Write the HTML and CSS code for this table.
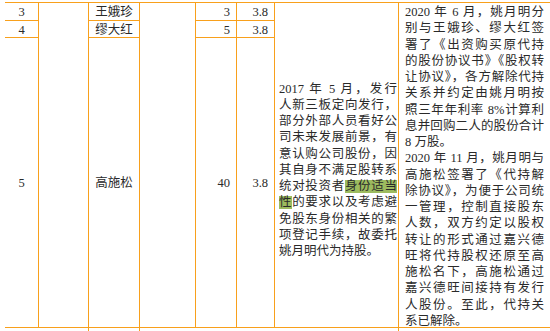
FILE: index.html
```html
<!DOCTYPE html>
<html lang="zh-CN">
<head>
<meta charset="utf-8">
<title>代持情况</title>
<link rel="stylesheet" href="styles.css">
</head>
<body>
<div class="sheet">
  <div class="grid">
    <div class="cell c-num">3</div>
    <div class="cell span3"></div>
    <div class="cell c-name">王娥珍</div>
    <div class="cell span3"></div>
    <div class="cell c-right">3</div>
    <div class="cell c-right">3.8</div>
    <div class="cell span3 c-desc">
      <div class="txt">
        <span class="ln">2017 年 5 月，发行</span>
        <span class="ln">人新三板定向发行，</span>
        <span class="ln">部分外部人员看好公</span>
        <span class="ln">司未来发展前景，有</span>
        <span class="ln">意认购公司股份，因</span>
        <span class="ln">其自身不满足股转系</span>
        <span class="ln">统对投资者<mark class="hl">身份适当</mark></span>
        <span class="ln"><mark class="hl">性</mark>的要求以及考虑避</span>
        <span class="ln">免股东身份相关的繁</span>
        <span class="ln">项登记手续，故委托</span>
        <span class="ln end">姚月明代为持股。</span>
      </div>
    </div>
    <div class="cell span3 c-note last">
      <div class="txt">
        <span class="ln">2020 年 6 月，姚月明分</span>
        <span class="ln">别与王娥珍、缪大红签</span>
        <span class="ln">署了《出资购买原代持</span>
        <span class="ln">的股份协议书》《股权转</span>
        <span class="ln">让协议》，各方解除代持</span>
        <span class="ln">关系并约定由姚月明按</span>
        <span class="ln">照三年年利率 8%计算利</span>
        <span class="ln">息并回购二人的股份合计</span>
        <span class="ln end">8 万股。</span>
        <span class="ln">2020 年 11 月，姚月明与</span>
        <span class="ln">高施松签署了《代持解</span>
        <span class="ln">除协议》，为便于公司统</span>
        <span class="ln">一管理，控制直接股东</span>
        <span class="ln">人数，双方约定以股权</span>
        <span class="ln">转让的形式通过嘉兴德</span>
        <span class="ln">旺将代持股权还原至高</span>
        <span class="ln">施松名下，高施松通过</span>
        <span class="ln">嘉兴德旺间接持有发行</span>
        <span class="ln">人股份。至此，代持关</span>
        <span class="ln end">系已解除。</span>
      </div>
    </div>

    <div class="cell c-num">4</div>
    <div class="cell c-name">缪大红</div>
    <div class="cell c-right">5</div>
    <div class="cell c-right">3.8</div>

    <div class="cell c-num">5</div>
    <div class="cell c-name">高施松</div>
    <div class="cell c-right">40</div>
    <div class="cell c-right">3.8</div>

    <div class="cell next span-c2"></div>
    <div class="cell next"></div>
    <div class="cell next span-c4"></div>
    <div class="cell next last"></div>
  </div>
</div>
</body>
</html>
```

FILE: styles.css
```css
html, body {
  margin: 0;
  padding: 0;
  background: #ffffff;
  overflow: hidden;
}

body {
  font-family: "Liberation Serif", "Noto Sans CJK SC", serif;
  font-size: 12.5px;
  font-weight: 400;
  color: #2a2a2a;
}

.sheet {
  padding: 2px 0 0 5px;
}

.grid {
  display: grid;
  grid-template-columns: 34px 50px 51px 56px 41px 38px 124px 151px;
  grid-template-rows: 18px 17px 290px 4px;
  border-top: 1px solid #f8a01c;
  width: 545px;
}

.cell {
  box-sizing: border-box;
  border-right: 1px solid #f8a01c;
  border-bottom: 1px solid #f8a01c;
  display: flex;
  align-items: center;
  line-height: 16px;
}

.cell.last {
  border-right: none;
}

.span3 {
  grid-row: span 3;
}

.c-num {
  justify-content: center;
  padding-top: 1px;
}

.c-name {
  justify-content: center;
  padding-top: 1px;
}

.c-right {
  justify-content: flex-end;
  padding-right: 6px;
  padding-top: 1px;
}

.c-desc {
  padding: 10px 0 0 4px;
  align-items: center;
}

.c-note {
  padding: 1px 0 0 6px;
  align-items: flex-start;
  overflow: hidden;
}

.c-desc .txt {
  width: 118px;
}

.c-note .txt {
  width: 139px;
}

.ln {
  display: block;
  line-height: 16.25px;
  height: 16.25px;
  text-align: justify;
  text-align-last: justify;
}

.ln.end {
  text-align-last: left;
}

.hl {
  color: inherit;
  background: linear-gradient(#9dbb5f, #9dbb5f) no-repeat 0 50% / 100% 13px;
}

.next {
  border-bottom: none;
}

.span-c2 {
  grid-column: span 2;
}

.span-c4 {
  grid-column: span 4;
}
```
